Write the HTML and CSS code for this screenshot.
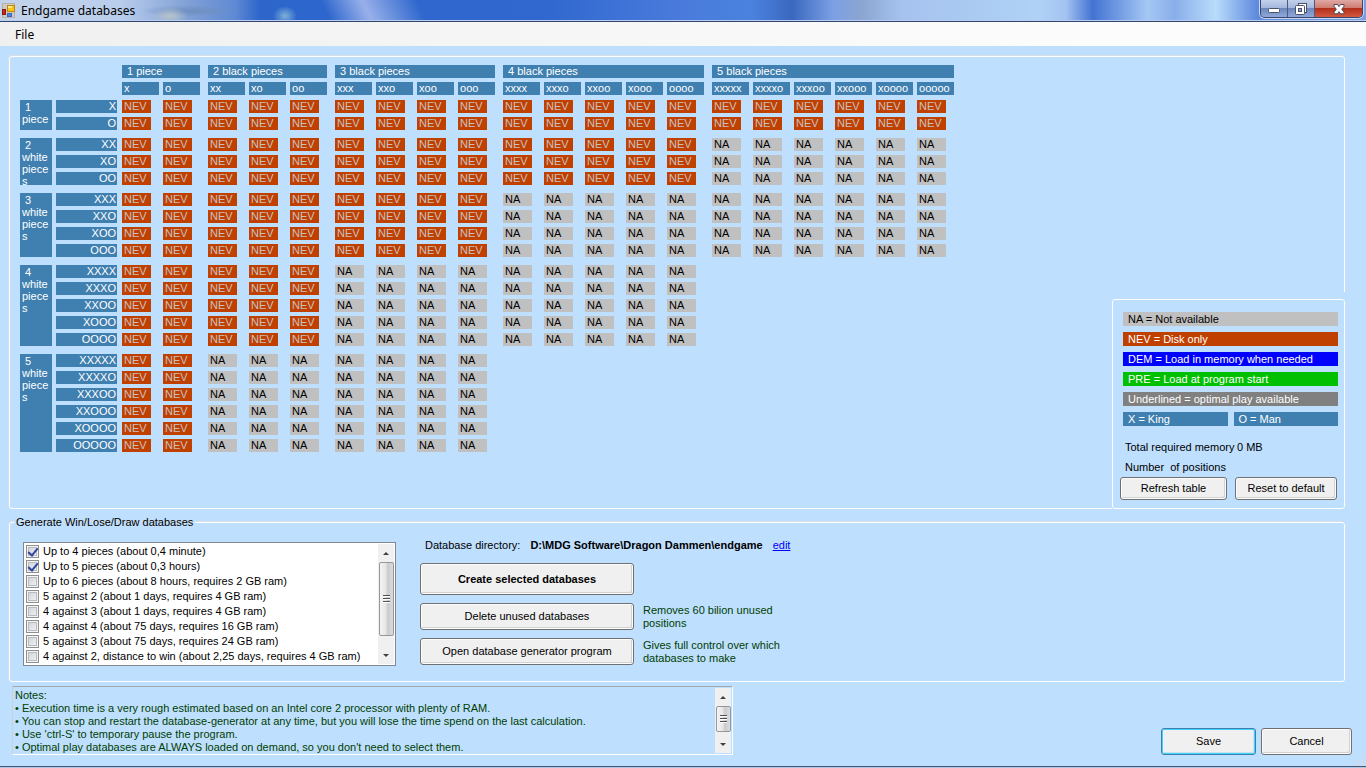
FILE: index.html
```
<!DOCTYPE html>
<html lang="en">
<head>
  <meta charset="UTF-8">
  <title>Endgame databases</title>
  <link rel="stylesheet" href="styles.css">
</head>
<body>
  <header class="titlebar">
    <svg class="app-icon" width="16" height="16" viewBox="0 0 16 16">
      <rect x="0.5" y="1.5" width="12" height="14" fill="#cfcbc3" stroke="#b5b1aa"/>
      <rect x="0.5" y="7.500" width="3" height="5" fill="#c42b1c" stroke="#8d1a12"/>
      <rect x="5.5" y="3.500" width="7" height="6" fill="#fcc419" stroke="#b98a0a"/>
      <rect x="6" y="4" width="4" height="2" fill="#ffe88a"/>
      <rect x="5.500" y="11.500" width="4" height="3" fill="#4f86e0" stroke="#3a66bd"/>
    </svg>
    <span class="title">Endgame databases</span>
    <div class="window-buttons">
      <button type="button" class="win-btn" aria-label="Minimize">
        <svg width="14" height="14" viewBox="0 0 14 14"><rect x="1.5" y="6.5" width="11" height="4" rx="1" fill="#fff" stroke="#4b5166"/></svg>
      </button>
      <button type="button" class="win-btn" aria-label="Restore">
        <svg width="14" height="14" viewBox="0 0 14 14">
          <rect x="4.5" y="1.5" width="8" height="9" fill="#fff" stroke="#4b5166"/>
          <rect x="1.5" y="3.5" width="9" height="9" rx="1" fill="#fff" stroke="#4b5166"/>
          <rect x="4.5" y="6.5" width="3" height="3" fill="#8fa5cf" stroke="#4b5166"/>
        </svg>
      </button>
      <button type="button" class="win-btn win-close" aria-label="Close">
        <svg width="14" height="14" viewBox="0 0 14 14"><path d="M2 2.5h3.5L7 4.7l1.5-2.2H12v1.800L9.700 7.200l2.300 3v1.600H8.500L7 9.700l-1.500 2.100H2v-1.600l2.300-3L2 4.300z" fill="#fff" stroke="#4b4a5c"/></svg>
      </button>
    </div>
  </header>

  <nav class="menubar">
    <button type="button" class="menu-item">File</button>
  </nav>

  <main class="content">
    <section class="panel overview">
      <table class="db-table" id="dbTable"></table>

      <div class="legend-wrap">
        <div class="legend-box">
          <div class="key key-na">NA = Not available</div>
          <div class="key key-nev">NEV = Disk only</div>
          <div class="key key-dem">DEM = Load in memory when needed</div>
          <div class="key key-pre">PRE = Load at program start</div>
          <div class="key key-opt">Underlined = optimal play available</div>
          <div class="key-pair">
            <div class="key key-piece">X = King</div>
            <div class="key key-piece">O = Man</div>
          </div>
          <dl class="totals">
            <dt>Total required memory</dt><dd>0 MB</dd>
            <dt>Number&nbsp; of positions</dt><dd></dd>
          </dl>
          <div class="legend-buttons">
            <button type="button" class="btn btn-small">Refresh table</button>
            <button type="button" class="btn btn-small">Reset to default</button>
          </div>
        </div>
      </div>
    </section>

    <fieldset class="panel generate">
      <legend>Generate Win/Lose/Draw databases</legend>
      <div class="generate-row">
        <div class="check-box">
          <div class="check-list">
            <label><input type="checkbox" checked> Up to 4 pieces (about 0,4 minute)</label>
            <label><input type="checkbox" checked> Up to 5 pieces (about 0,3 hours)</label>
            <label><input type="checkbox"> Up to 6 pieces (about 8 hours, requires 2 GB ram)</label>
            <label><input type="checkbox"> 5 against 2 (about 1 days, requires 4 GB ram)</label>
            <label><input type="checkbox"> 4 against 3 (about 1 days, requires 4 GB ram)</label>
            <label><input type="checkbox"> 4 against 4 (about 75 days, requires 16 GB ram)</label>
            <label><input type="checkbox"> 5 against 3 (about 75 days, requires 24 GB ram)</label>
            <label><input type="checkbox"> 4 against 2, distance to win (about 2,25 days, requires 4 GB ram)</label>
          </div>
          <div class="scrollbar">
            <span class="arrow arrow-up"></span>
            <span class="thumb thumb-long"></span>
            <span class="arrow arrow-down"></span>
          </div>
        </div>

        <div class="actions">
          <p class="directory">
            <span>Database directory:</span>
            <strong>D:\MDG Software\Dragon Dammen\endgame</strong>
            <a href="#">edit</a>
          </p>
          <div class="action-grid">
            <button type="button" class="btn btn-create">Create selected databases</button>
            <span></span>
            <button type="button" class="btn">Delete unused databases</button>
            <span class="hint">Removes 60 bilion unused positions</span>
            <button type="button" class="btn">Open database generator program</button>
            <span class="hint">Gives full control over which databases to make</span>
          </div>
        </div>
      </div>
    </fieldset>

    <footer class="bottom">
      <div class="notes">
        <textarea readonly aria-label="Notes">Notes:
• Execution time is a very rough estimated based on an Intel core 2 processor with plenty of RAM.
• You can stop and restart the database-generator at any time, but you will lose the time spend on the last calculation.
• Use 'ctrl-S' to temporary pause the program.
• Optimal play databases are ALWAYS loaded on demand, so you don't need to select them.</textarea>
        <div class="scrollbar">
          <span class="arrow arrow-up"></span>
          <span class="thumb"></span>
          <span class="arrow arrow-down"></span>
        </div>
      </div>
      <div class="dialog-buttons">
        <button type="button" class="btn btn-default">Save</button>
        <button type="button" class="btn">Cancel</button>
      </div>
    </footer>
  </main>

  <div class="window-edge"></div>
  <svg class="grip" width="10" height="10" viewBox="0 0 10 10">
    <path d="M7 0h2v2H7zM7 4h2v2H7zM7 8h2v2H7zM3 4h2v2H3zM3 8h2v2H3zM0 8h1v2H0z" fill="#d8d8d8"/>
  </svg>

  <script>
    const MAX_PIECES = 5;

    // black groups that have cells, per white group
    const visibleGroups = [5, 5, 5, 4, 3];
    // black groups that are on disk, per white group
    const diskGroups = [5, 4, 3, 2, 1];

    function combos(count, king, man) {
      const list = [];
      for (let men = 0; men <= count; men++) {
        list.push(king.repeat(count - men) + man.repeat(men));
      }
      return list;
    }

    function buildTable() {
      let cols = '<col class="col-group"><col class="col-name">';
      let groups = '<td colspan="2"></td>';
      let names = '<td colspan="2"></td>';

      for (let b = 1; b <= MAX_PIECES; b++) {
        const label = b === 1 ? '1 piece' : b + ' black pieces';
        groups += `<th class="black-group first" colspan="${b + 1}" scope="colgroup">${label}</th>`;
        combos(b, 'x', 'o').forEach((name, i) => {
          cols += `<col class="${i === 0 ? 'col-first' : 'col-cell'}">`;
          names += `<th class="black-name ${i === 0 ? 'first' : ''}" scope="col">${name}</th>`;
        });
      }

      let html = `<colgroup>${cols}</colgroup><thead><tr>${groups}</tr><tr>${names}</tr></thead>`;

      for (let w = 1; w <= MAX_PIECES; w++) {
        const label = w === 1 ? '1 piece' : w + ' white pieces';
        const rows = combos(w, 'X', 'O');
        html += '<tbody>';
        rows.forEach((name, r) => {
          html += '<tr>';
          if (r === 0) {
            html += `<th class="white-group" rowspan="${rows.length}" scope="rowgroup"><div style="height: ${rows.length * 17 - 4}px">${label}</div></th>`;
          }
          html += `<th class="white-name" scope="row">${name}</th>`;
          for (let b = 1; b <= visibleGroups[w - 1]; b++) {
            const state = b <= diskGroups[w - 1] ? 'nev' : 'na';
            for (let i = 0; i <= b; i++) {
              html += `<td class="cell ${state} ${i === 0 ? 'first' : ''}">${state.toUpperCase()}</td>`;
            }
          }
          html += '</tr>';
        });
        html += '</tbody>';
      }

      document.getElementById('dbTable').innerHTML = html;
    }

    buildTable();
  </script>
</body>
</html>
```
FILE: styles.css
```
* {
  box-sizing: border-box;
}

body {
  margin: 0;
  min-height: 100vh;
  display: flex;
  flex-direction: column;
  position: relative;
  background: #bfdfff;
  color: #000;
  font-family: "Liberation Sans", Arial, sans-serif;
  font-size: 11px;
  line-height: 13px;
}

button {
  font: inherit;
  color: inherit;
}

/* title bar */
.titlebar {
  display: flex;
  align-items: flex-start;
  height: 22px;
  padding: 0 2px;
  border-bottom: 1px solid #33466b;
  box-shadow: inset 0 -1px 0 #b9cdf0;
  background:
    radial-gradient(ellipse 12px 10px at 285px 16px, #7fb0d8, transparent),
    radial-gradient(ellipse 18px 9px at 170px 16px, #b7c3c9, transparent),
    radial-gradient(ellipse 50px 6px at 190px 11px, #6f8fbf, transparent),
    linear-gradient(90deg, #c3d3ea 0, #b9cdec 120px, #7f9fd6 190px, #5f8ad4 235px, transparent 260px),
    linear-gradient(65deg, transparent 24%, #98b0ea 27%, transparent 31%),
    linear-gradient(90deg, #2d63c0 0%, #2d66cc 22%, #3068cf 40%, #4a7bdc 50%, #4a82de 55%, #3b68bf 58%, #7ba0e4 61%, #8ba5d0 63%, #a5c2ee 66%, #b0d2f6 76%, #a4c4f0 78%, #4373d3 80%, #a4c8f4 84%, #8aaee9 86%, #b9dcfc 89%, #5f8bdd 92%, #7c9fdf 100%);
}

.app-icon {
  margin-top: 2px;
}

.title {
  flex: 1;
  margin-left: 3px;
  font-family: "Noto Sans", "Segoe UI", sans-serif;
  font-size: 12px;
  line-height: 22px;
}

.window-buttons {
  display: flex;
  height: 18px;
  margin-right: 1px;
  border: 1px solid #39456a;
  border-top: 0;
  border-radius: 0 0 5px 5px;
  box-shadow: 0 0 0 1px #c8d8f4;
  overflow: hidden;
}

.win-btn {
  display: flex;
  align-items: center;
  justify-content: center;
  width: 27px;
  padding: 0;
  border: 0;
  border-right: 1px solid #4d5a80;
  background: linear-gradient(#c3d0ea 0, #a4b8df 45%, #6c87bd 50%, #8fa9dc 100%);
}

.win-close {
  width: 47px;
  border-right: 0;
  background: linear-gradient(#e0a9a4 0, #cf7d73 45%, #b32f1c 50%, #d4583f 100%);
}

/* menu */
.menubar {
  height: 24px;
  padding: 0 9px;
  background: linear-gradient(90deg, #f0f0f0, #fcfcfc 80%);
}

.menu-item {
  height: 24px;
  padding: 0 6px;
  border: 0;
  background: none;
  font-family: "Noto Sans", "Segoe UI", sans-serif;
  font-size: 12px;
}

/* layout */
.content {
  flex: 1;
  display: flex;
  flex-direction: column;
  padding: 10px 14px 11px 9px;
}

.panel {
  margin: 0 7px 0 0;
  border: 1px solid #fff;
  border-radius: 3px;
  box-shadow: -1px -1px 0 #d5dfe5;
}

.overview {
  flex: 1;
  display: flex;
  justify-content: space-between;
  align-items: flex-end;
}

/* database table */
.db-table {
  align-self: flex-start;
  flex: none;
  width: 934px;
  margin: 8px 0 8px 10px;
  table-layout: fixed;
  border-collapse: separate;
  border-spacing: 0;
}

.col-group {
  width: 36px;
}

.col-name {
  width: 62px;
}

.col-cell {
  width: 41px;
}

.col-first {
  width: 45px;
}

/* gaps are transparent borders round each coloured box */
.db-table th,
.db-table td {
  height: 17px;
  padding: 0 2px;
  border: 0 solid transparent;
  border-bottom-width: 4px;
  background-clip: padding-box;
  font-weight: normal;
  line-height: 13px;
  text-align: left;
  white-space: nowrap;
}

.db-table th {
  background-color: #4080b0;
  color: #fff;
}

.db-table .first {
  border-left-width: 4px;
}

.db-table .black-group {
  padding-left: 5px;
  border-right-width: 4px;
}

.db-table .black-name {
  border-right-width: 4px;
}

.db-table .white-group {
  padding: 0;
  border-right-width: 4px;
  vertical-align: top;
  white-space: normal;
}

.white-group div {
  padding: 1px 0 0 2px;
  overflow: hidden;
  overflow-wrap: anywhere;
  line-height: 12px;
  text-indent: 3px;
}

.db-table .white-name {
  padding: 0 1px;
  border-right-width: 1px;
  text-align: right;
}

.db-table .cell {
  border-right-width: 12px;
}

.nev {
  background-color: #c04000;
  color: #c8c0c0;
}

.na {
  background-color: #c0c0c0;
}

.db-table tbody tr:first-child > * {
  height: 21px;
  border-top-width: 4px;
}

.db-table thead + tbody tr:first-child > * {
  height: 18px;
  border-top-width: 1px;
}

/* legend */
.legend-wrap {
  flex: none;
  width: 233px;
  margin: 0 -1px -1px 0;
  padding-top: 7px;
  background: #bfdfff;
}

.legend-box {
  padding: 12px 6px 8px 10px;
  border: 1px solid #fff;
  border-radius: 3px;
}

.key {
  flex: 1;
  height: 14px;
  margin-bottom: 6px;
  padding-left: 5px;
  line-height: 14px;
  color: #fff;
}

.key-na {
  background: #c0c0c0;
  color: #000;
}

.key-nev {
  background: #c04000;
}

.key-dem {
  background: #0000ff;
}

.key-pre {
  background: #00c000;
}

.key-opt {
  background: #808080;
}

.key-piece {
  background: #4080b0;
}

.key-pair {
  display: flex;
  gap: 6px;
}

.totals {
  display: grid;
  grid-template-columns: 112px 1fr;
  margin: 5px 0 0 2px;
  line-height: 20px;
}

.totals dt {
  white-space: nowrap;
}

.totals dd {
  margin: 0;
}

.legend-buttons {
  display: grid;
  grid-template-columns: 107px 102px;
  gap: 8px;
  margin-left: -3px;
}

/* buttons */
.btn {
  height: 27px;
  padding: 0 4px;
  border: 1px solid #707070;
  border-radius: 3px;
  box-shadow: inset 0 0 0 1px #fcfcfc, inset -2px -2px 0 #d2d2d2;
  background: #f0f0f0;
}

.btn-small {
  height: 23px;
}

.btn-default {
  border-color: #3c7fb1;
  box-shadow: inset 0 0 0 1px #48d1f8, inset -2px -2px 0 #c6e4ee;
}

/* generate */
.generate {
  min-width: 0;
  margin-top: 7px;
  padding: 0 13px 15px;
}

.generate legend {
  margin-left: -9px;
  padding: 0 2px;
}

.generate-row {
  display: flex;
  gap: 24px;
  padding-top: 13px;
}

.check-box {
  display: flex;
  flex: none;
  width: 373px;
  height: 124px;
  border: 1px solid #828790;
  background: #fff;
}

.check-list {
  flex: 1;
  padding: 1px 2px;
  overflow: hidden;
}

.check-list label {
  display: flex;
  align-items: center;
  gap: 4px;
  height: 15px;
  white-space: nowrap;
}

.check-list input {
  flex: none;
  display: grid;
  place-items: center;
  width: 13px;
  height: 13px;
  margin: 0;
  appearance: none;
  border: 1px solid #8e8f8f;
  box-shadow: inset 0 0 0 1px #f4f4f4, inset 0 0 0 2px #b8bcc2;
  background: linear-gradient(135deg, #cbcfd5, #f6f6f6);
}

.check-list input:checked::before {
  content: "";
  width: 4px;
  height: 8px;
  margin-top: -2px;
  border: solid #31479e;
  border-width: 0 2px 2px 0;
  transform: rotate(40deg);
}

/* scrollbars */
.scrollbar {
  flex: none;
  display: flex;
  flex-direction: column;
  align-items: center;
  width: 16px;
  margin: 1px;
  background: #f0f0f0;
}

.arrow {
  display: flex;
  align-items: center;
  justify-content: center;
  width: 100%;
  height: 18px;
}

.arrow::before {
  content: "";
  border: 3px solid transparent;
}

.arrow-up::before {
  border-top: 0;
  border-bottom-color: #404040;
}

.arrow-down {
  margin-top: auto;
}

.arrow-down::before {
  border-bottom: 0;
  border-top-color: #404040;
}

.thumb {
  display: flex;
  align-items: center;
  justify-content: center;
  width: 15px;
  height: 26px;
  border: 1px solid #979797;
  border-radius: 2px;
  background: linear-gradient(90deg, #f4f4f4 0, #e6e6e6 45%, #c8cacd 60%, #dcdcdc 100%);
}

.thumb::before {
  content: "";
  width: 7px;
  height: 8px;
  background: repeating-linear-gradient(#505050 0, #505050 1px, #fff 1px, #fff 2px, transparent 2px, transparent 3px);
}

.thumb-long {
  height: 74px;
}

/* actions */
.directory {
  display: flex;
  gap: 10px;
  margin: -3px 0 11px 5px;
}

.directory a {
  color: #0000ff;
}

.action-grid {
  display: grid;
  grid-template-columns: 214px 160px;
  column-gap: 9px;
  row-gap: 8px;
  align-items: center;
}

.btn-create {
  height: 32px;
  font-weight: bold;
}

.hint {
  color: #004000;
}

/* bottom */
.bottom {
  display: flex;
  justify-content: space-between;
  align-items: flex-end;
  margin-top: 4px;
  padding-left: 3px;
}

.notes {
  display: flex;
  width: 721px;
  height: 69px;
  border: 1px solid #fff;
  border-top-color: #a0a8b0;
  border-left-color: #c8d0d8;
}

.notes textarea {
  flex: 1;
  padding: 2px 2px 0;
  border: 0;
  outline: 0;
  resize: none;
  overflow: hidden;
  background: none;
  color: #004000;
  font: inherit;
  white-space: pre;
}

.dialog-buttons {
  display: grid;
  grid-template-columns: 95px 91px;
  gap: 5px;
}

.window-edge {
  height: 2px;
  border-top: 1px solid #46566e;
  background: #a9c8ec;
}

.grip {
  position: absolute;
  right: 1px;
  bottom: 2px;
}
```
